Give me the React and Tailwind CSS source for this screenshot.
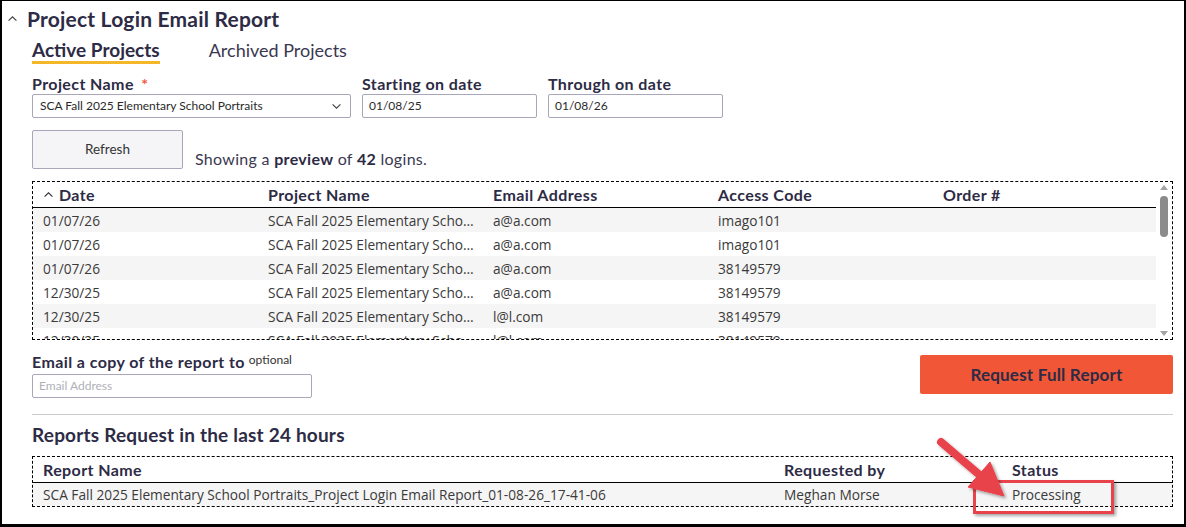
import React from "react";

const F = { fontFamily: "Lato, 'Open Sans', sans-serif" };
const D = { fontFamily: "'Open Sans', 'Noto Sans', sans-serif" };

function ChevUp({ className = "" }) {
  return (
    <svg viewBox="0 0 12 8" className={className} fill="none" stroke="currentColor" strokeWidth="1.3">
      <path d="M1.5 6.5 L6 2 L10.5 6.5" />
    </svg>
  );
}
function ChevDown({ className = "" }) {
  return (
    <svg viewBox="0 0 12 8" className={className} fill="none" stroke="currentColor" strokeWidth="1.3">
      <path d="M1.5 1.5 L6 6 L10.5 1.5" />
    </svg>
  );
}

const rows = [
  ["01/07/26", "SCA Fall 2025 Elementary School Portraits", "a@a.com", "imago101"],
  ["01/07/26", "SCA Fall 2025 Elementary School Portraits", "a@a.com", "imago101"],
  ["01/07/26", "SCA Fall 2025 Elementary School Portraits", "a@a.com", "38149579"],
  ["12/30/25", "SCA Fall 2025 Elementary School Portraits", "a@a.com", "38149579"],
  ["12/30/25", "SCA Fall 2025 Elementary School Portraits", "l@l.com", "38149579"],
  ["12/30/25", "SCA Fall 2025 Elementary School Portraits", "l@l.com", "38149579"],
];

export default function App() {
  return (
    <div
      style={F}
      className="relative box-border h-[527px] w-[1186px] overflow-hidden border-t border-l-2 border-r-2 border-b-[3px] border-black bg-white text-[#2d2b45]"
    >
      {/* Title */}
      <div className="flex h-[34px] items-center pl-[5px]">
        <ChevUp className="h-[7px] w-[11px] text-[#444]" />
        <span className="ml-[9px] text-[21px] font-bold leading-none tracking-[0.2px]">Project Login Email Report</span>
      </div>

      <div className="pl-[30px] pr-[11px]">
        {/* Tabs */}
        <div className="mt-[4px] flex items-start">
          <div className="border-b-[3px] border-[#f4b729] text-[19px] font-bold leading-[22px]">Active Projects</div>
          <div className="ml-[49px] text-[18px] leading-[22px] text-[#3a3850]">Archived Projects</div>
        </div>

        {/* Filters */}
        <div className="mt-[11px] flex gap-[11px]">
          <div className="w-[319px]">
            <div className="text-[16px] font-bold leading-[18px] tracking-[0.4px]">
              Project Name <span className="ml-[3px] text-[#f05a3a]">*</span>
            </div>
            <div className="mt-[1px] flex h-[24px] items-center justify-between rounded-[2px] border border-[#a8a6b8] pl-[7px] pr-[8px] text-[12px] text-[#2a2a2a]">
              <span>SCA Fall 2025 Elementary School Portraits</span>
              <ChevDown className="h-[7px] w-[11px] text-[#444]" />
            </div>
          </div>
          <div className="w-[175px]">
            <div className="text-[16px] font-bold leading-[18px] tracking-[0.4px]">Starting on date</div>
            <div className="mt-[1px] flex h-[24px] items-center rounded-[2px] border border-[#a8a6b8] pl-[6px] text-[12px] text-[#2a2a2a]">01/08/25</div>
          </div>
          <div className="w-[175px]">
            <div className="text-[16px] font-bold leading-[18px] tracking-[0.4px]">Through on date</div>
            <div className="mt-[1px] flex h-[24px] items-center rounded-[2px] border border-[#a8a6b8] pl-[6px] text-[12px] text-[#2a2a2a]">01/08/26</div>
          </div>
        </div>

        {/* Refresh */}
        <div className="mt-[12px] flex items-end">
          <div className="flex h-[39px] w-[151px] items-center justify-center rounded-[2px] border border-[#a8a6b8] bg-[#f5f5f7] pb-[1px] text-[13.5px] text-[#333]">
            Refresh
          </div>
          <div className="ml-[12px] text-[16px] leading-[20px] tracking-[0.3px] text-[#3a3850]">
            Showing a <b className="text-[#2d2b45]">preview</b> of <b className="text-[#2d2b45]">42</b> logins.
          </div>
        </div>

        {/* Logins table */}
        <div className="mt-[12px] flex h-[159px] border border-dashed border-black">
          <div className="flex-1 overflow-hidden">
            <div className="grid h-[26px] grid-cols-[225px_225px_225px_225px_1fr] items-center border-b border-black pl-[10px] text-[16px] font-bold tracking-[0.4px]">
              <div className="flex items-center">
                <ChevUp className="mr-[5px] h-[7px] w-[11px] text-[#333]" />
                Date
              </div>
              <div>Project Name</div>
              <div>Email Address</div>
              <div>Access Code</div>
              <div>Order #</div>
            </div>
            {rows.map((r, i) => (
              <div
                key={i}
                style={D}
                className={`grid h-[24px] grid-cols-[225px_225px_225px_225px_1fr] items-center pl-[10px] pt-[2px] text-[13.7px] text-[#3a3a3a] ${i % 2 === 0 ? "bg-[#f5f5f5]" : "bg-white"}`}
              >
                <div>{r[0]}</div>
                <div className="truncate pr-[12px]">{r[1]}</div>
                <div>{r[2]}</div>
                <div>{r[3]}</div>
                <div></div>
              </div>
            ))}
          </div>
          {/* scrollbar */}
          <div className="flex w-[16px] flex-col items-center justify-between bg-white py-[3px]">
            <svg viewBox="0 0 8 5" className="h-[5px] w-[8px]"><path d="M0 5 L4 0 L8 5 Z" fill="#a3a3a3" /></svg>
            <div className="mb-auto mt-[6px] h-[41px] w-[8px] rounded-[4px] bg-[#8b8b8b]"></div>
            <svg viewBox="0 0 8 5" className="h-[5px] w-[8px]"><path d="M0 0 L4 5 L8 0 Z" fill="#a3a3a3" /></svg>
          </div>
        </div>

        {/* Email + request */}
        <div className="flex items-start justify-between">
          <div className="mt-[13px]">
            <div className="flex items-start leading-[18px]">
              <span className="text-[16px] font-bold tracking-[0.4px]">Email a copy of the report to</span>
              <span className="ml-[4px] text-[12px] leading-[14px] text-[#333]">optional</span>
            </div>
            <div className="mt-[3px] flex h-[24px] w-[280px] items-center rounded-[2px] border border-[#a8a6b8] pl-[6px] text-[12px] text-[#b0b0b8]">
              Email Address
            </div>
          </div>
          <div className="mt-[15px] flex h-[39px] w-[253px] items-center justify-center rounded-[2px] bg-[#f15737] text-[17px] font-bold tracking-[0.2px] text-[#2d2b45]">
            Request Full Report
          </div>
        </div>

        <div className="mt-[16px] border-t border-[#cccccc]"></div>

        <div className="mt-[9px] text-[19px] font-bold leading-[22px] tracking-[0.2px]">Reports Request in the last 24 hours</div>

        {/* Reports table */}
        <div className="mt-[10px] border border-dashed border-black">
          <div className="grid h-[26px] grid-cols-[741px_228px_1fr] items-center border-b border-black pl-[10px] text-[16px] font-bold tracking-[0.4px]">
            <div>Report Name</div>
            <div>Requested by</div>
            <div>Status</div>
          </div>
          <div style={D} className="grid h-[23px] grid-cols-[741px_228px_1fr] items-center bg-[#f5f5f5] pl-[10px] pt-[1px] text-[13.7px] text-[#3a3a3a]">
            <div>SCA Fall 2025 Elementary School Portraits_Project Login Email Report_01-08-26_17-41-06</div>
            <div>Meghan Morse</div>
            <div>Processing</div>
          </div>
        </div>
      </div>

      {/* Annotation: red box + arrow */}
      <div className="pointer-events-none absolute left-[971px] top-[479px] h-[34px] w-[141px] border-[3px] border-[#e8424b] shadow-[2px_2px_3px_rgba(0,0,0,0.35)]"></div>
      <svg className="pointer-events-none absolute left-[920px] top-[425px] h-[90px] w-[100px]" viewBox="920 425 100 90">
        <defs>
          <filter id="sh" x="-20%" y="-20%" width="150%" height="150%">
            <feDropShadow dx="2" dy="2" stdDeviation="1.5" floodColor="#000" floodOpacity="0.35" />
          </filter>
        </defs>
        <g filter="url(#sh)" fill="#e8424b" stroke="#e8424b">
          <line x1="939" y1="441" x2="980" y2="476" strokeWidth="8" strokeLinecap="round" />
          <path d="M1002 495 L966 486 L988 461 Z" strokeWidth="1" strokeLinejoin="round" />
        </g>
      </svg>
    </div>
  );
}
